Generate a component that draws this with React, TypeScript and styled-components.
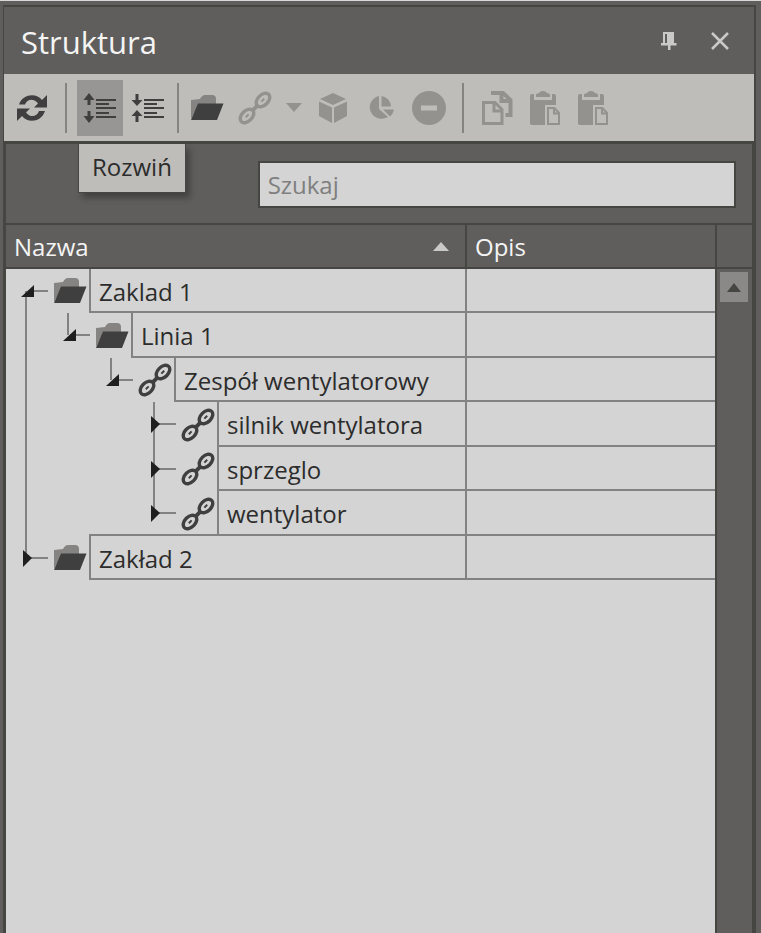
import React, { useState } from 'react';
import styled, { createGlobalStyle, css } from 'styled-components';

const c = {
  frame: '#5f5e5c',
  edge: '#454542',
  bar: '#bebdba',
  barPressed: '#979694',
  sheet: '#d4d4d4',
  rule: '#828282',
  ink: '#2c2c2c',
  icon: '#3f3f3f',
  iconOff: '#93928f',
  light: '#f4f4f4',
};

const GlobalStyle = createGlobalStyle`
  *, *::before, *::after { box-sizing: border-box; }
  body {
    margin: 0;
    background: ${c.frame};
    font-family: "Open Sans", "Noto Sans", sans-serif;
    font-size: 24px;
    color: ${c.ink};
  }
  button {
    display: flex;
    align-items: center;
    justify-content: center;
    padding: 0;
    border: 0;
    background: none;
    font: inherit;
    color: inherit;
  }
  svg { display: block; flex: none; }
`;

const Frame = styled.div`
  display: flex;
  min-height: 100vh;
  padding: 4px 5px 0 3px;
  border-top: 1px solid #d8d8d8;
  background: ${c.frame};
`;

const Panel = styled.section`
  display: flex;
  flex: 1;
  flex-direction: column;
  min-width: 0;
  border: solid ${c.edge};
  border-width: 2px 2px 0 1px;
`;

const TitleBar = styled.header`
  display: flex;
  align-items: center;
  gap: 16px;
  height: 67px;
  padding: 0 17px;
`;

const Title = styled.h1`
  flex: 1;
  margin: 0;
  padding-top: 3px;
  font-size: 31px;
  font-weight: 400;
  line-height: 44px;
  color: ${c.light};
`;

const TitleButton = styled.button`
  width: 35px;
  height: 36px;
  color: #c9c9c7;
`;

const Toolbar = styled.div`
  display: flex;
  align-items: center;
  height: 70px;
  padding: 0 4px;
  border-bottom: 3px solid ${c.edge};
  background: ${c.bar};
`;

const ToolSlot = styled.div`
  position: relative;
  flex: none;
`;

const ToolButton = styled.button<{ $pressed?: boolean; $narrow?: boolean }>`
  flex: none;
  width: ${(p) => (p.$narrow ? 30 : 48)}px;
  height: 58px;
  border: 1px solid transparent;
  background-color: ${(p) => (p.$pressed ? c.barPressed : 'transparent')};
  background-clip: padding-box;
  color: ${c.icon};

  &:disabled { color: ${c.iconOff}; }
`;

const Separator = styled.div<{ $width: number }>`
  display: flex;
  flex: none;
  justify-content: center;
  width: ${(p) => p.$width}px;

  &::before {
    content: '';
    width: 2px;
    height: 50px;
    background: #858482;
  }
`;

const Tooltip = styled.div`
  position: absolute;
  z-index: 2;
  top: 65px;
  left: 2px;
  padding: 6px 13px 9px;
  border: solid ${c.edge};
  border-width: 0 1px 1px;
  background: ${c.bar};
  box-shadow: 4px 5px 6px rgba(0, 0, 0, 0.3);
  line-height: 33px;
  white-space: nowrap;
`;

const Body = styled.div`
  display: flex;
  flex: 1;
  flex-direction: column;
  border: solid ${c.edge};
  border-width: 0 2px;
`;

const SearchBand = styled.div`
  display: flex;
  justify-content: flex-end;
  padding: 17px 16px 15px;
`;

const SearchBox = styled.input`
  width: 67%;
  height: 47px;
  padding: 0 8px;
  border: 2px solid ${c.edge};
  border-radius: 0;
  background: ${c.sheet};
  font: inherit;
  color: ${c.ink};

  &::placeholder { color: #7f7f7f; opacity: 1; }
`;

const TreeArea = styled.div`
  display: flex;
  flex: 1;
`;

const Sheet = styled.div`
  flex: 1;
  min-width: 0;
  border-right: 2px solid ${c.edge};
  background: ${c.sheet};
`;

const Table = styled.table`
  width: 100%;
  border-spacing: 0;
  table-layout: fixed;
`;

const headerCell = css`
  height: 46px;
  border: solid ${c.edge};
  border-width: 2px 0;
  background: ${c.frame};
`;

const HeadCell = styled.th<{ $width?: number }>`
  ${headerCell}
  width: ${(p) => (p.$width ? `${p.$width}px` : 'auto')};
  padding: 0 16px 0 8px;
  font-weight: 400;
  line-height: 33px;
  text-align: left;
  color: ${c.light};

  & + & { border-left-width: 2px; }
  svg { color: #c9c9c7; }
`;

const HeadLabel = styled.div`
  display: flex;
  align-items: center;
  justify-content: space-between;
`;

const ScrollColumn = styled.div`
  width: 35px;
`;

const ScrollHead = styled.div`
  ${headerCell}
`;

const ScrollButton = styled.button`
  width: 28px;
  height: 30px;
  margin: 3px 0 0 3px;
  background: #8a8987;
  color: ${c.edge};
`;

const Row = styled.tr`
  height: 44px;
  &:nth-child(even) { height: 45px; }
`;

const NameCell = styled.td`
  height: inherit;
  padding: 0;
`;

const NameLine = styled.div`
  display: flex;
  height: 100%;
`;

const Indent = styled.div<{ $level: number }>`
  flex: none;
  width: ${(p) => [0, 42, 85, 128][p.$level]}px;
  padding-left: 19px;

  &::before {
    content: '';
    display: block;
    width: 2px;
    height: 100%;
    background: ${c.rule};
  }
`;

const Twisty = styled.button`
  flex: none;
  width: 42px;
  overflow: hidden;
  && { align-items: flex-start; }
  svg { overflow: visible; }
`;

const NodeIcon = styled.span`
  display: flex;
  flex: none;
  align-items: center;
  justify-content: center;
  width: 41px;
  padding-left: 3px;
  color: ${c.icon};
`;

const NodeLabel = styled.span<{ $capped?: boolean }>`
  flex: 1;
  min-width: 0;
  margin-top: ${(p) => (p.$capped ? -2 : 0)}px;
  padding: 6px 0 0 8px;
  border: solid ${c.rule};
  border-width: ${(p) => (p.$capped ? 2 : 0)}px 0 2px 2px;
  line-height: 33px;
  white-space: nowrap;
`;

const DescCell = styled.td`
  padding: 0;
  border: solid ${c.rule};
  border-width: 0 0 2px 2px;
`;

const ChainIcon = () => (
  <svg width="34" height="34" viewBox="0 0 34 34" fill="none" stroke="currentColor">
    <g transform="rotate(-45 17 17)">
      <ellipse cx="5.700" cy="17" rx="8" ry="5.200" strokeWidth="3.400" />
      <ellipse cx="28.300" cy="17" rx="8" ry="5.200" strokeWidth="3.400" />
      <path d="M14 17H20" strokeWidth="4" />
      <path d="M4 17H8M26 17H30" strokeWidth="2" />
    </g>
  </svg>
);

const FolderIcon = () => (
  <svg width="34" height="28" viewBox="0 0 34 28">
    <path d="M1 6L10 5Q12 1 15 1H22Q26 1 26 5V12H8L1 25Z" fill="#858482" />
    <path d="M8 9.500H33.500L27 26H1Z" fill="currentColor" />
  </svg>
);

const RefreshIcon = () => (
  <svg width="32" height="28" viewBox="0 0 32 28">
    <path d="M3 10.500C7 -1 21 -1 26 6L31 1V13.500H18L22 9.500C18 4 11 5 9 10.500Z" fill="currentColor" />
    <path d="M29 17C25 29 11 29 6 22L1 27V14.500H14L10 18.500C14 24 21 23 23 17Z" fill="currentColor" />
  </svg>
);

const ExpandAllIcon = () => (
  <svg width="34" height="30" viewBox="0 0 34 30" fill="currentColor">
    <path d="M6 0L11.500 7H7.500V12H4.500V7H0.500ZM6 30L11.500 23H7.500V18H4.500V23H0.500Z" />
    <path d="M13 6H33V8H13ZM13 10H26V12H13ZM13 14H33V16H13ZM13 19H26V21H13ZM13 23H33V25H13Z" />
  </svg>
);

const CollapseAllIcon = () => (
  <svg width="34" height="30" viewBox="0 0 34 30" fill="currentColor">
    <path d="M6 13L0.500 7H4.500V1H7.500V7H11.500ZM6 17L0.500 23H4.500V29H7.500V23H11.500Z" />
    <path d="M13 6H33V8H13ZM13 10H26V12H13ZM13 14H33V16H13ZM13 19H26V21H13ZM13 23H33V25H13Z" />
  </svg>
);

const CubeIcon = () => (
  <svg width="30" height="30" viewBox="0 0 30 30" fill="currentColor">
    <path d="M15 0L28 6L15 12L2 6ZM1 8.500L14 14.500V30L1 23ZM29 8.500L16 14.500V30L29 23Z" />
  </svg>
);

const PieIcon = () => (
  <svg width="28" height="24" viewBox="0 0 28 24" fill="currentColor">
    <path d="M12 0V13L21 21A12 11.500 0 1 1 12 0Z" />
    <path d="M14.500 0A11 11 0 0 1 24 10.500H14.500ZM16 13.500H27Q26 18 23 20.500Z" />
  </svg>
);

const MinusIcon = () => (
  <svg width="34" height="34" viewBox="0 0 34 34">
    <circle cx="17" cy="17" r="17" fill="currentColor" />
    <rect x="9" y="14.500" width="16" height="5" fill={c.bar} />
  </svg>
);

const CopyIcon = () => (
  <svg width="32" height="36" viewBox="0 0 32 36" fill="none" stroke="currentColor" strokeWidth="3">
    <path d="M10 3H22L29.500 10V25H24.500" strokeWidth="4" />
    <path d="M20.500 3V11H29" strokeWidth="4" />
    <path d="M2.500 12.500H14L21 19.500V33.500H2.500Z" fill={c.bar} />
    <path d="M13 13V21H21" />
  </svg>
);

const PasteIcon = () => (
  <svg width="30" height="36" viewBox="0 0 30 36">
    <path d="M2 4H24Q26 4 26 6V35H2Q0 35 0 33V6Q0 4 2 4Z" fill="currentColor" />
    <path d="M4 3H22V10H4Z" fill={c.bar} />
    <path d="M6 7V4.500Q6 3.500 9 3Q10 1 13 1Q16 1 17 3Q20 3.500 20 4.500V7Z" fill="currentColor" />
    <path d="M15 15H26L30 21V36H15Z" fill={c.bar} />
    <path d="M18 18H24.500L29 23V34H18ZM24 18V23.500H29" fill={c.bar} stroke="currentColor" strokeWidth="2" />
  </svg>
);

const PinIcon = () => (
  <svg width="16" height="18" viewBox="0 0 16 18" fill="currentColor">
    <path fillRule="evenodd" d="M2 0H13V11H15.500V13.500H9.500V18H7V13.500H0V11H2ZM4 2V11H6V2Z" />
  </svg>
);

const CloseIcon = () => (
  <svg width="18" height="18" viewBox="0 0 18 18" stroke="currentColor" strokeWidth="2.500">
    <path d="M1 1L17 17M17 1L1 17" />
  </svg>
);

const CaretIcon = ({ up, width = 16 }: { up?: boolean; width?: number }) => (
  <svg width={width} height="9" viewBox="0 0 16 9" preserveAspectRatio="none" fill="currentColor">
    <path d={up ? 'M0 9L8 0L16 9Z' : 'M0 0L8 9L16 0Z'} />
  </svg>
);

type Node = {
  name: string;
  level: number;
  kind: 'folder' | 'chain';
  open?: boolean;
  above?: boolean;
  below?: boolean;
  capped?: boolean;
};

const nodes: Node[] = [
  { name: 'Zaklad 1', level: 0, kind: 'folder', open: true, below: true },
  { name: 'Linia 1', level: 1, kind: 'folder', open: true, above: true },
  { name: 'Zespół wentylatorowy', level: 2, kind: 'chain', open: true, above: true },
  { name: 'silnik wentylatora', level: 3, kind: 'chain', above: true, below: true },
  { name: 'sprzeglo', level: 3, kind: 'chain', above: true, below: true },
  { name: 'wentylator', level: 3, kind: 'chain', above: true },
  { name: 'Zakład 2', level: 0, kind: 'folder', above: true, capped: true },
];

const TwistyIcon = ({ open, above, below }: Pick<Node, 'open' | 'above' | 'below'>) => (
  <svg width="42" height="44" viewBox="0 0 42 44">
    {above && <rect x="19" width="2" height="22" fill={c.rule} />}
    {below && <rect x="19" y="22" width="2" height="23" fill={c.rule} />}
    <rect x="22" y="21" width="20" height="2" fill={c.rule} />
    <path d={open ? 'M15 28H28V16Z' : 'M17 14L26 22L17 31Z'} fill="#1f1f1f" />
  </svg>
);

const TreeRow = ({ node }: { node: Node }) => (
  <Row>
    <NameCell>
      <NameLine>
        {node.level > 0 && <Indent $level={node.level} />}
        <Twisty type="button" aria-label={node.name} aria-expanded={!!node.open}>
          <TwistyIcon open={node.open} above={node.above} below={node.below} />
        </Twisty>
        <NodeIcon>{node.kind === 'folder' ? <FolderIcon /> : <ChainIcon />}</NodeIcon>
        <NodeLabel $capped={node.capped}>{node.name}</NodeLabel>
      </NameLine>
    </NameCell>
    <DescCell />
  </Row>
);

export default function App() {
  const [query, setQuery] = useState('');
  return (
    <>
      <GlobalStyle />
      <Frame>
        <Panel>
          <TitleBar>
            <Title>Struktura</Title>
            <TitleButton type="button" aria-label="Przypnij"><PinIcon /></TitleButton>
            <TitleButton type="button" aria-label="Zamknij"><CloseIcon /></TitleButton>
          </TitleBar>
          <Toolbar role="toolbar">
            <ToolButton type="button" aria-label="Odśwież"><RefreshIcon /></ToolButton>
            <Separator $width={20} />
            <ToolSlot>
              <ToolButton type="button" $pressed aria-describedby="expand-tip" aria-label="Rozwiń">
                <ExpandAllIcon />
              </ToolButton>
              <Tooltip role="tooltip" id="expand-tip">Rozwiń</Tooltip>
            </ToolSlot>
            <ToolButton type="button" aria-label="Zwiń"><CollapseAllIcon /></ToolButton>
            <Separator $width={11} />
            <ToolButton type="button" aria-label="Dodaj folder"><FolderIcon /></ToolButton>
            <ToolButton type="button" disabled aria-label="Dodaj zespół"><ChainIcon /></ToolButton>
            <ToolButton type="button" disabled $narrow aria-label="Więcej"><CaretIcon /></ToolButton>
            <ToolButton type="button" disabled aria-label="Dodaj element"><CubeIcon /></ToolButton>
            <ToolButton type="button" disabled aria-label="Dodaj wykres"><PieIcon /></ToolButton>
            <ToolButton type="button" disabled aria-label="Usuń"><MinusIcon /></ToolButton>
            <Separator $width={20} />
            <ToolButton type="button" disabled aria-label="Kopiuj"><CopyIcon /></ToolButton>
            <ToolButton type="button" disabled aria-label="Wklej"><PasteIcon /></ToolButton>
            <ToolButton type="button" disabled aria-label="Wklej do"><PasteIcon /></ToolButton>
          </Toolbar>
          <Body>
            <SearchBand>
              <SearchBox
                type="text"
                aria-label="Szukaj"
                placeholder="Szukaj"
                value={query}
                onChange={(e) => setQuery(e.target.value)}
              />
            </SearchBand>
            <TreeArea>
              <Sheet>
                <Table>
                  <thead>
                    <tr>
                      <HeadCell aria-sort="ascending">
                        <HeadLabel>Nazwa<CaretIcon up /></HeadLabel>
                      </HeadCell>
                      <HeadCell $width={250}>Opis</HeadCell>
                    </tr>
                  </thead>
                  <tbody>
                    {nodes.map((node) => <TreeRow key={node.name} node={node} />)}
                  </tbody>
                </Table>
              </Sheet>
              <ScrollColumn>
                <ScrollHead />
                <ScrollButton type="button" aria-label="Przewiń w górę"><CaretIcon up width={14} /></ScrollButton>
              </ScrollColumn>
            </TreeArea>
          </Body>
        </Panel>
      </Frame>
    </>
  );
}
